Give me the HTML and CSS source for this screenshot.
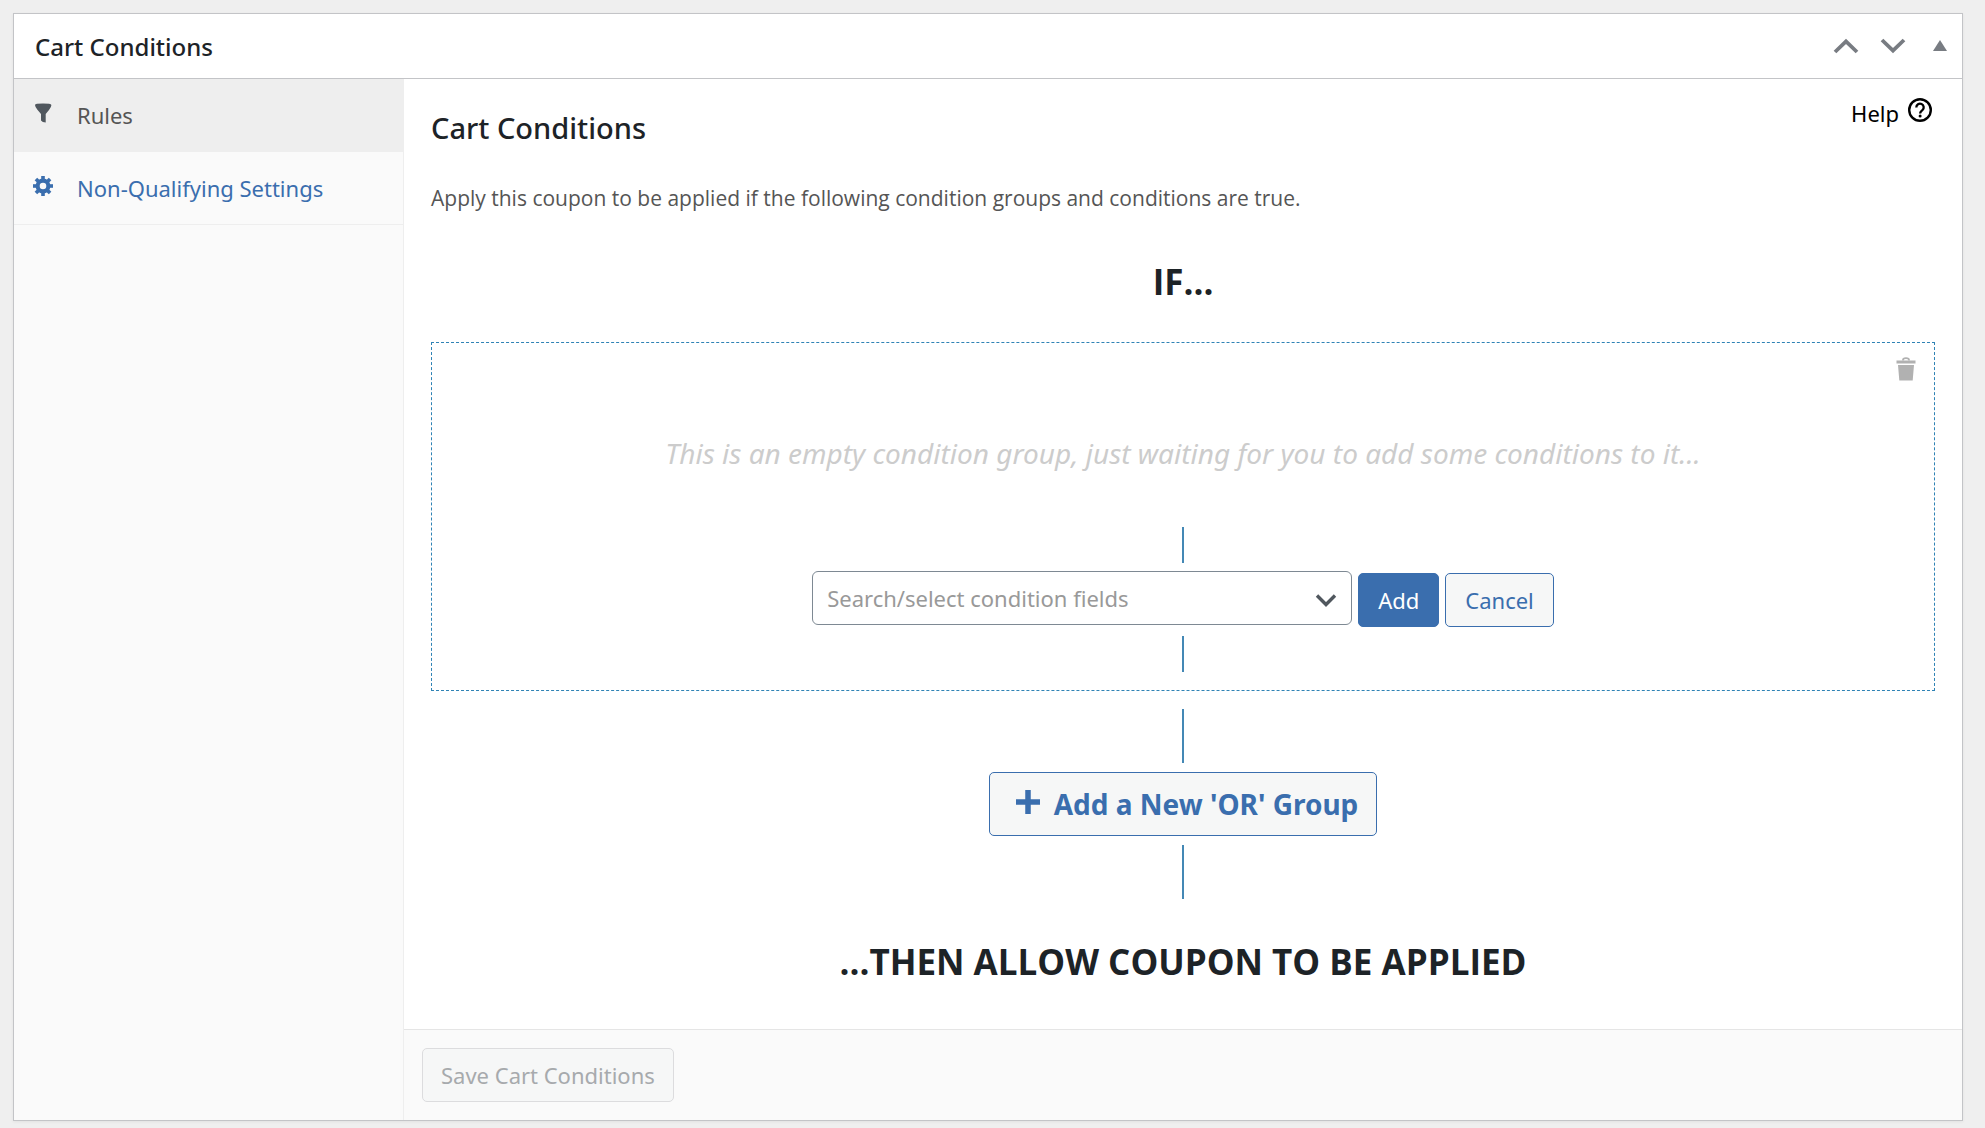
FILE: index.html
```html
<!DOCTYPE html>
<html lang="en">
<head>
<meta charset="utf-8">
<meta name="viewport" content="width=device-width, initial-scale=1">
<title>Cart Conditions</title>
<link rel="stylesheet" href="styles.css">
</head>
<body>
<section class="postbox">
  <header class="postbox-header">
    <h2 class="postbox-title">Cart Conditions</h2>
    <div class="handle-actions">
      <button type="button" class="handle" aria-label="Move up"><svg width="26" height="16" viewBox="0 0 26 16"><path d="M2 14 13 3.300 24 14" fill="none" stroke="#787c82" stroke-width="3.800"/></svg></button>
      <button type="button" class="handle" aria-label="Move down"><svg width="26" height="16" viewBox="0 0 26 16"><path d="M2 2 13 12.700 24 2" fill="none" stroke="#787c82" stroke-width="3.800"/></svg></button>
      <button type="button" class="handle" aria-label="Toggle panel"><svg width="14" height="12" viewBox="0 0 14 12"><path d="M7 0 14 11H0Z" fill="#787c82"/></svg></button>
    </div>
  </header>
  <div class="panel">
    <nav class="tabs">
      <a href="#rules" class="tab tab-active">
        <svg class="tab-icon" width="20" height="20" viewBox="0 0 20 20"><path d="M2 2Q2 .6 10 .6T18.400 2Q18.400 4 16 7L12.700 11V19.600Q9.400 19.600 8 17.500V11L4.600 7Q2 4 2 2Z" fill="#50575e"/></svg>
        Rules
      </a>
      <a href="#settings" class="tab">
        <svg class="tab-icon" width="20" height="20" viewBox="0 0 20 20"><g fill="#3a6eae"><path fill-rule="evenodd" d="M10 2.600a7.400 7.400 0 1 0 0 14.800 7.400 7.400 0 0 0 0-14.800Zm0 4.100a3.300 3.300 0 1 1 0 6.600 3.300 3.300 0 0 1 0-6.600Z"/><path id="tooth" d="M8.200 0h3.600v4.500H8.200Z"/><use href="#tooth" transform="rotate(45 10 10)"/><use href="#tooth" transform="rotate(90 10 10)"/><use href="#tooth" transform="rotate(135 10 10)"/><use href="#tooth" transform="rotate(180 10 10)"/><use href="#tooth" transform="rotate(225 10 10)"/><use href="#tooth" transform="rotate(270 10 10)"/><use href="#tooth" transform="rotate(315 10 10)"/></g></svg>
        Non-Qualifying Settings
      </a>
    </nav>
    <div class="main">
      <div class="content">
        <div class="content-head">
          <h3 class="content-title">Cart Conditions</h3>
          <a href="#help" class="help">Help
            <svg width="26" height="26" viewBox="0 0 26 26"><circle cx="13" cy="13" r="10.800" fill="none" stroke="#000" stroke-width="2.400"/><path d="M9.300 10.400a3.700 3.700 0 1 1 6.100 2.800c-1.500 1.200-2.300 1.700-2.300 3.300" fill="none" stroke="#000" stroke-width="2.300"/><circle cx="13.100" cy="19" r="1.500"/></svg>
          </a>
        </div>
        <p class="description">Apply this coupon to be applied if the following condition groups and conditions are true.</p>
        <p class="logic logic-if">IF...</p>
        <div class="group">
          <button type="button" class="remove" aria-label="Remove group"><svg width="20" height="24" viewBox="0 0 20 24"><path d="M7 3.500V3Q7 1.200 10 1.200T13 3v.5" fill="none" stroke="#b1b1b1" stroke-width="1.800"/><path d="M.5 3.500h19v3H.5ZM2 8h16l-1.300 15.500H3.300Z" fill="#b1b1b1"/></svg></button>
          <p class="empty">This is an empty condition group, just waiting for you to add some conditions to it...</p>
          <div class="line"></div>
          <div class="add-row">
            <div class="select-wrap">
              <select class="field" aria-label="Condition field"><option>Search/select condition fields</option></select>
              <svg class="chevron" width="22" height="14" viewBox="0 0 22 14"><path d="M2 2.500 11 11.500 20 2.500" fill="none" stroke="#50575e" stroke-width="3.400"/></svg>
            </div>
            <button type="button" class="btn btn-primary">Add</button>
            <button type="button" class="btn">Cancel</button>
          </div>
          <div class="line"></div>
        </div>
        <div class="line line-long"></div>
        <button type="button" class="btn btn-group"><svg width="24" height="24" viewBox="0 0 24 24"><path d="M0 12h24M12 0v24" stroke="#3a6eae" stroke-width="5.500"/></svg>Add a New 'OR' Group</button>
        <div class="line line-long"></div>
        <p class="logic logic-then">...THEN ALLOW COUPON TO BE APPLIED</p>
      </div>
      <footer class="footer">
        <button type="button" class="btn btn-save" disabled>Save Cart Conditions</button>
      </footer>
    </div>
  </div>
</section>
</body>
</html>
```
FILE: styles.css
```css
* { box-sizing: border-box; }

body {
  margin: 0;
  padding: 13px 22px 7px 13px;
  background: #efefef;
  color: #1d2327;
  font-family: "Segoe UI", "Noto Sans", "Open Sans", sans-serif;
  font-size: 22px;
  line-height: 32px;
}

h2, h3, p { margin: 0; }
svg { display: block; flex: none; }
a { text-decoration: none; }
button, select { font: inherit; }

.postbox {
  background: #fff;
  border: 1px solid #c3c4c7;
  box-shadow: 0 1px 3px rgba(0, 0, 0, 0.06);
}

.postbox-header {
  display: flex;
  align-items: center;
  justify-content: space-between;
  height: 65px;
  padding: 0 15px 0 21px;
  border-bottom: 1px solid #c3c4c7;
}

.postbox-title { padding-top: 2px; font-size: 24px; font-weight: 500; }

.handle-actions { display: flex; align-items: center; gap: 21px; }
.handle { padding: 0; border: 0; background: none; }
.handle:last-child { margin-left: 6px; }

.panel { display: grid; grid-template-columns: 390px 1fr; }

.tabs { background: #fafafa; border-right: 1px solid #eee; }

.tab {
  display: flex;
  align-items: center;
  gap: 24px;
  height: 73px;
  padding: 0 19px;
  border-bottom: 1px solid #eee;
  color: #3a6eae;
}
.tab-active { background: #eee; color: #555; }
.tab-icon { margin-bottom: 4px; }

.content {
  display: flex;
  flex-direction: column;
  align-items: center;
  padding: 18px 27px 43px 27px;
}

.content-head { display: flex; justify-content: space-between; width: 100%; }
.content-title { margin-top: 15px; font-size: 29px; font-weight: 500; }
.help { display: flex; gap: 8px; align-self: flex-start; padding-right: 2px; color: #000; }

.description {
  align-self: flex-start;
  margin-top: 38px;
  font-family: "Segoe UI", "Open Sans", sans-serif;
  font-size: 21px;
  color: #555;
}

.logic {
  font-family: "Segoe UI", "Open Sans", sans-serif;
  font-size: 35px;
  line-height: 48px;
  font-weight: 700;
}
.logic-if { margin: 44px 0 36px; }
.logic-then { margin-top: 39px; }

.group {
  position: relative;
  display: flex;
  flex-direction: column;
  align-items: center;
  width: 100%;
  padding: 94px 20px 18px;
  border: 1px dashed #2f83b5;
}
.remove {
  position: absolute;
  top: 14px;
  right: 18px;
  padding: 0;
  border: 0;
  background: none;
}
.empty { margin-bottom: 58px; font-size: 28px; font-style: italic; color: #ccc; }

.line { width: 2px; height: 36px; background: #4488b5; }
.line-long { height: 54px; margin: 18px 0 9px; }
.btn-group + .line-long { margin: 9px 0 0; }

.add-row { display: flex; align-items: flex-end; gap: 6px; margin: 8px 0 9px; }
.select-wrap { position: relative; margin-bottom: 2px; }
.field {
  width: 540px;
  height: 54px;
  padding: 0 48px 0 14px;
  border: 1px solid #7e8993;
  border-radius: 6px;
  background: #fff;
  color: #999;
  appearance: none;
}
.chevron { position: absolute; top: 22px; right: 15px; pointer-events: none; }

.btn {
  height: 54px;
  padding: 0 18px;
  border: 1px solid #3a6eae;
  border-radius: 5px;
  background: #f6f7f7;
  color: #3a6eae;
}
.add-row .btn { padding: 0 19px; }
.add-row .btn-primary { background: #3a6eae; color: #fff; }
.btn-group {
  display: flex;
  align-items: center;
  gap: 14px;
  height: 64px;
  font-size: 28px;
  font-weight: 700;
}
.btn-group svg { margin: 0 0 4px 8px; }

.footer { padding: 18px; border-top: 1px solid #e5e5e5; background: #fafafa; }
.footer .btn-save { border-color: #dcdcde; color: #a7aaad; }
```
